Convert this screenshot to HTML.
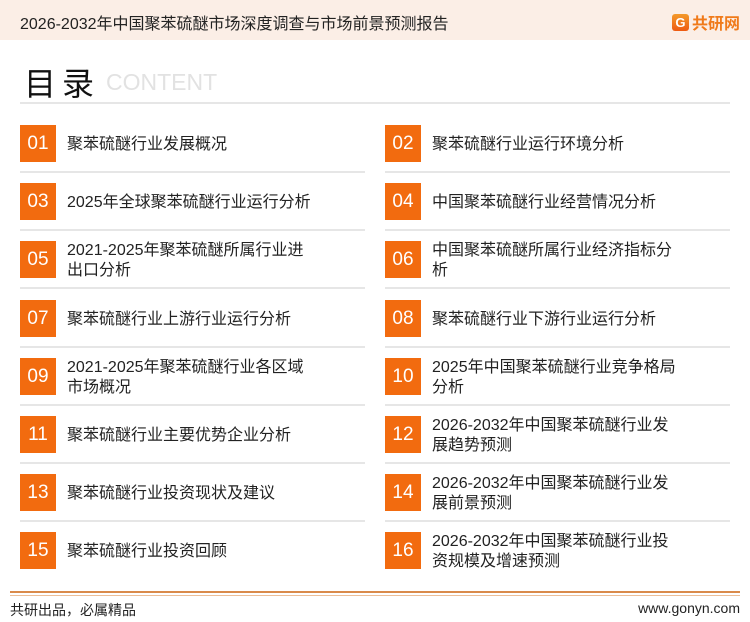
<!DOCTYPE html>
<html><head><meta charset="utf-8"><style>
*{margin:0;padding:0;box-sizing:border-box}
body{width:750px;height:622px;background:#fff;font-family:"Liberation Sans","Noto Sans CJK SC",sans-serif;position:relative;overflow:hidden;color:#222}
.hdr{position:absolute;left:0;top:0;width:750px;height:40px;background:#fbeee6}
.hdr .t{position:absolute;left:20px;top:10px;font-size:16px;color:#222}
.logo{position:absolute;right:10px;top:10px;font-size:16px;font-weight:bold;color:#f07a1a;display:flex;align-items:center;gap:3px}
.logo i{display:inline-block;width:17px;height:17px;background:linear-gradient(#f39a2a,#ee5a12);border-radius:3px;color:#fff;font-style:normal;font-size:13px;text-align:center;line-height:17px}
.ml{position:absolute;left:24px;top:59px;font-size:32px;color:#111;letter-spacing:6px}
.ct{position:absolute;left:106px;top:69px;font-size:23px;color:#e2e2e2}
.hl{position:absolute;left:20px;top:102px;width:710px;height:2px;background:#e6e6e6}
.it{position:absolute;width:345px;height:58px}
.it .n{position:absolute;left:0;top:0;width:36px;height:37px;background:#f26b0f;color:#fff;font-size:19px;text-align:center;line-height:38px}
.it .x{position:absolute;left:47px;font-size:16px;line-height:20px;color:#222}
.it .s{position:absolute;left:0;top:46px;width:345px;height:2px;background:#e6e6e6}
.fl{position:absolute;left:10px;width:730px;background:#d98a4a}
.ft{position:absolute;top:600px;font-size:14px;color:#222}
</style></head><body>
<div class="hdr"><div class="t">2026-2032年中国聚苯硫醚市场深度调查与市场前景预测报告</div><div class="logo"><i>G</i>共研网</div></div>
<div class="ml">目录</div><div class="ct">CONTENT</div>
<div class="hl"></div>

<div class="it" style="left:20px;top:125px"><div class="n">01</div><div class="x" style="top:10px">聚苯硫醚行业发展概况</div><div class="s"></div></div>
<div class="it" style="left:385px;top:125px"><div class="n">02</div><div class="x" style="top:10px">聚苯硫醚行业运行环境分析</div><div class="s"></div></div>
<div class="it" style="left:20px;top:183px"><div class="n">03</div><div class="x" style="top:10px">2025年全球聚苯硫醚行业运行分析</div><div class="s"></div></div>
<div class="it" style="left:385px;top:183px"><div class="n">04</div><div class="x" style="top:10px">中国聚苯硫醚行业经营情况分析</div><div class="s"></div></div>
<div class="it" style="left:20px;top:241px"><div class="n">05</div><div class="x" style="top:0px">2021-2025年聚苯硫醚所属行业进<br>出口分析</div><div class="s"></div></div>
<div class="it" style="left:385px;top:241px"><div class="n">06</div><div class="x" style="top:0px">中国聚苯硫醚所属行业经济指标分<br>析</div><div class="s"></div></div>
<div class="it" style="left:20px;top:300px"><div class="n">07</div><div class="x" style="top:10px">聚苯硫醚行业上游行业运行分析</div><div class="s"></div></div>
<div class="it" style="left:385px;top:300px"><div class="n">08</div><div class="x" style="top:10px">聚苯硫醚行业下游行业运行分析</div><div class="s"></div></div>
<div class="it" style="left:20px;top:358px"><div class="n">09</div><div class="x" style="top:0px">2021-2025年聚苯硫醚行业各区域<br>市场概况</div><div class="s"></div></div>
<div class="it" style="left:385px;top:358px"><div class="n">10</div><div class="x" style="top:0px">2025年中国聚苯硫醚行业竞争格局<br>分析</div><div class="s"></div></div>
<div class="it" style="left:20px;top:416px"><div class="n">11</div><div class="x" style="top:10px">聚苯硫醚行业主要优势企业分析</div><div class="s"></div></div>
<div class="it" style="left:385px;top:416px"><div class="n">12</div><div class="x" style="top:0px">2026-2032年中国聚苯硫醚行业发<br>展趋势预测</div><div class="s"></div></div>
<div class="it" style="left:20px;top:474px"><div class="n">13</div><div class="x" style="top:10px">聚苯硫醚行业投资现状及建议</div><div class="s"></div></div>
<div class="it" style="left:385px;top:474px"><div class="n">14</div><div class="x" style="top:0px">2026-2032年中国聚苯硫醚行业发<br>展前景预测</div><div class="s"></div></div>
<div class="it" style="left:20px;top:532px"><div class="n">15</div><div class="x" style="top:10px">聚苯硫醚行业投资回顾</div></div>
<div class="it" style="left:385px;top:532px"><div class="n">16</div><div class="x" style="top:0px">2026-2032年中国聚苯硫醚行业投<br>资规模及增速预测</div></div>

<div class="fl" style="top:591px;height:2px"></div>
<div class="fl" style="top:595px;height:1px;background:#ebbf9a"></div>
<div class="ft" style="left:10px">共研出品，必属精品</div>
<div class="ft" style="right:10px">www.gonyn.com</div>
</body></html>
